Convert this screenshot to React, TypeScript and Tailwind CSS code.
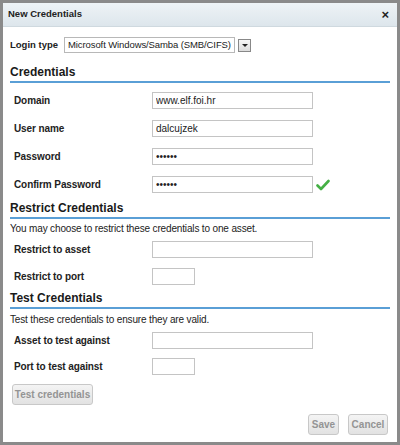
import React from "react";

const font = { fontFamily: '"Liberation Sans", Arial, sans-serif' };

function Heading({ children }: { children: React.ReactNode }) {
  return (
    <div className="border-b-2 border-[#5a9fd6] pb-[2px] text-[12px] font-bold leading-[14px] text-[#1a1a1a]">
      {children}
    </div>
  );
}

function Row({ label, value, small, check, type }: { label: string; value?: string; small?: boolean; check?: boolean; type?: string }) {
  return (
    <div className="flex h-[17px] items-center pl-[4px]">
      <div className="w-[138px] whitespace-nowrap text-[10px] font-bold tracking-[-0.1px] text-[#222]">{label}</div>
      <input
        readOnly
        type={type || "text"}
        value={value || ""}
        className={`${small ? "w-[43px]" : "w-[161px]"} h-[17px] border border-[#c4c4c4] bg-white px-[3px] text-[10px] text-[#222] outline-none`}
        style={font}
      />
      {check && (
        <svg width="14" height="12" viewBox="0 0 14 12" className="ml-[3px]">
          <path d="M1.5 6.5 L5 10 L12.5 2" stroke="#45b045" strokeWidth="2.6" fill="none" strokeLinecap="round" strokeLinejoin="round" />
        </svg>
      )}
    </div>
  );
}

function Btn({ children, className }: { children: React.ReactNode; className?: string }) {
  return (
    <button
      className={`h-[21px] whitespace-nowrap rounded-[3px] border border-[#c8c8c8] bg-gradient-to-b from-[#f4f4f4] to-[#e2e2e2] text-[10px] font-bold text-[#949494] ${className || ""}`}
      style={font}
    >
      {children}
    </button>
  );
}

export default function App() {
  return (
    <div className="h-[445px] w-[400px] overflow-hidden border-[3px] border-[#8a8a8a] bg-white" style={font}>
      <div className="flex h-[24px] items-center justify-between border-b border-[#cfd9df] bg-gradient-to-b from-[#eef3f6] to-[#dde6ec] pl-[5px] pr-[8px]">
        <span className="text-[9.5px] font-bold text-[#222]">New Credentials</span>
        <span className="text-[13px] font-bold leading-none text-[#222]">×</span>
      </div>

      <div className="pl-[7px] pr-[7px]">
        <div className="mt-[10px] flex h-[16px] items-center">
          <span className="mr-[6px] whitespace-nowrap text-[9.5px] font-bold text-[#222]">Login type</span>
          <div className="flex h-[16px] w-[171px] items-center whitespace-nowrap border border-[#b8b8b8] px-[3px] text-[9.5px] tracking-[-0.1px] text-[#222]">
            Microsoft Windows/Samba (SMB/CIFS)
          </div>
          <div className="ml-[3px] flex h-[13px] w-[13px] items-center justify-center border border-[#888] bg-gradient-to-b from-[#f6f6f6] to-[#dcdcdc]">
            <div className="h-0 w-0 border-x-[3px] border-t-[3px] border-x-transparent border-t-[#222]" />
          </div>
        </div>

        <div className="mt-[12px]">
          <Heading>Credentials</Heading>
        </div>
        <div className="mt-[9px] flex flex-col gap-[11px]">
          <Row label="Domain" value="www.elf.foi.hr" />
          <Row label="User name" value="dalcujzek" />
          <Row label="Password" value="xxxxxx" type="password" />
          <Row label="Confirm Password" value="xxxxxx" type="password" check />
        </div>

        <div className="mt-[8px]">
          <Heading>Restrict Credentials</Heading>
        </div>
        <div className="mt-[4px] whitespace-nowrap text-[10px] leading-[12px] tracking-[-0.15px] text-[#222]">
          You may choose to restrict these credentials to one asset.
        </div>
        <div className="mt-[6px] flex flex-col gap-[10px]">
          <Row label="Restrict to asset" />
          <Row label="Restrict to port" small />
        </div>

        <div className="mt-[6px]">
          <Heading>Test Credentials</Heading>
        </div>
        <div className="mt-[5px] whitespace-nowrap text-[10px] leading-[12px] tracking-[-0.15px] text-[#222]">
          Test these credentials to ensure they are valid.
        </div>
        <div className="mt-[6px] flex flex-col gap-[9px]">
          <Row label="Asset to test against" />
          <Row label="Port to test against" small />
        </div>

        <Btn className="ml-[2px] mt-[9px] w-[81px]">Test credentials</Btn>

        <div className="mt-[9px] flex justify-end gap-[9px] pr-[2px]">
          <Btn className="w-[31px]">Save</Btn>
          <Btn className="w-[40px]">Cancel</Btn>
        </div>
      </div>
    </div>
  );
}
